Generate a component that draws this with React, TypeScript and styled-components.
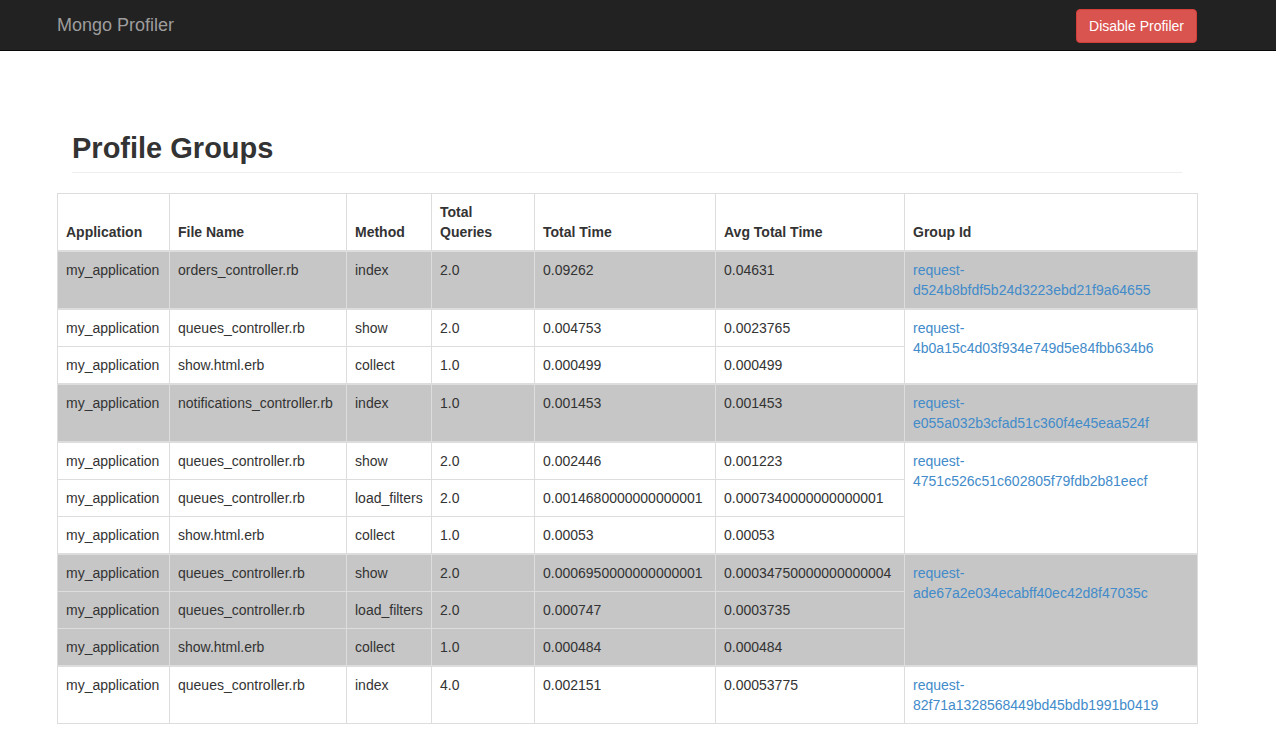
import styled, { createGlobalStyle } from "styled-components";

const GlobalStyle = createGlobalStyle`
	* {
		box-sizing: border-box;
	}
	body {
		margin: 0;
		background: #fff;
		color: #333;
		font-family: "Liberation Sans", Arial, sans-serif;
		font-size: 14px;
		line-height: 20px;
	}
`;

const Navbar = styled.nav`
	height: 51px;
	background-color: #222;
	border-bottom: 1px solid #080808;
`;

const NavInner = styled.div`
	width: 1140px;
	margin-left: 57px;
	height: 50px;
	display: flex;
	align-items: center;
	justify-content: space-between;
`;

const Brand = styled.a`
	font-size: 18px;
	line-height: 20px;
	color: #9d9d9d;
	text-decoration: none;
`;

const DangerButton = styled.button`
	height: 34px;
	margin-top: 1px;
	padding: 6px 12px;
	font-family: inherit;
	font-size: 14px;
	line-height: 20px;
	color: #fff;
	background-color: #d9534f;
	border: 1px solid #d43f3a;
	border-radius: 4px;
	cursor: pointer;
`;

const Main = styled.main`
	width: 1140px;
	margin-left: 57px;
	padding-bottom: 30px;
`;

const PageHeader = styled.div`
	margin: 77px 15px 20px;
	padding-bottom: 4px;
	border-bottom: 1px solid #eee;
`;

const Title = styled.h1`
	margin: 0;
	font-size: 29px;
	line-height: 40px;
	font-weight: bold;
	color: #333;
`;

const Table = styled.table`
	width: 1140px;
	table-layout: fixed;
	border-collapse: collapse;
	border: 1px solid #ddd;
`;

const HeadCell = styled.th`
	padding: 8px;
	text-align: left;
	vertical-align: bottom;
	font-weight: bold;
	border: 1px solid #ddd;
	border-bottom: 2px solid #ddd;
`;

const Group = styled.tbody<{ $shaded: boolean }>`
	background-color: ${(p) => (p.$shaded ? "#c6c6c6" : "#fff")};
	border-top: 2px solid #ddd;
`;

const Cell = styled.td`
	padding: 8px;
	vertical-align: top;
	border: 1px solid #ddd;
	white-space: nowrap;
`;

const IdCell = styled.td`
	padding: 8px;
	vertical-align: top;
	border: 1px solid #ddd;
`;

const IdLink = styled.a`
	color: #428bca;
	text-decoration: none;
`;

type Row = [string, string, string, string, string, string];

const groups: { id: string; rows: Row[] }[] = [
	{
		id: "request-d524b8bfdf5b24d3223ebd21f9a64655",
		rows: [["my_application", "orders_controller.rb", "index", "2.0", "0.09262", "0.04631"]],
	},
	{
		id: "request-4b0a15c4d03f934e749d5e84fbb634b6",
		rows: [
			["my_application", "queues_controller.rb", "show", "2.0", "0.004753", "0.0023765"],
			["my_application", "show.html.erb", "collect", "1.0", "0.000499", "0.000499"],
		],
	},
	{
		id: "request-e055a032b3cfad51c360f4e45eaa524f",
		rows: [["my_application", "notifications_controller.rb", "index", "1.0", "0.001453", "0.001453"]],
	},
	{
		id: "request-4751c526c51c602805f79fdb2b81eecf",
		rows: [
			["my_application", "queues_controller.rb", "show", "2.0", "0.002446", "0.001223"],
			["my_application", "queues_controller.rb", "load_filters", "2.0", "0.0014680000000000001", "0.0007340000000000001"],
			["my_application", "show.html.erb", "collect", "1.0", "0.00053", "0.00053"],
		],
	},
	{
		id: "request-ade67a2e034ecabff40ec42d8f47035c",
		rows: [
			["my_application", "queues_controller.rb", "show", "2.0", "0.0006950000000000001", "0.00034750000000000004"],
			["my_application", "queues_controller.rb", "load_filters", "2.0", "0.000747", "0.0003735"],
			["my_application", "show.html.erb", "collect", "1.0", "0.000484", "0.000484"],
		],
	},
	{
		id: "request-82f71a1328568449bd45bdb1991b0419",
		rows: [["my_application", "queues_controller.rb", "index", "4.0", "0.002151", "0.00053775"]],
	},
];

const columns = [
	{ label: "Application", width: 112 },
	{ label: "File Name", width: 177 },
	{ label: "Method", width: 85 },
	{ label: "Total Queries", width: 103 },
	{ label: "Total Time", width: 181 },
	{ label: "Avg Total Time", width: 189 },
	{ label: "Group Id", width: 293 },
];

function App() {
	return (
		<>
			<GlobalStyle />
			<Navbar>
				<NavInner>
					<Brand href="#">Mongo Profiler</Brand>
					<DangerButton>Disable Profiler</DangerButton>
				</NavInner>
			</Navbar>
			<Main>
				<PageHeader>
					<Title>Profile Groups</Title>
				</PageHeader>
				<Table>
					<colgroup>
						{columns.map((c) => (
							<col key={c.label} style={{ width: c.width }} />
						))}
					</colgroup>
					<thead>
						<tr>
							{columns.map((c) => (
								<HeadCell key={c.label}>
									{c.label === "Total Queries" ? (
										<>
											Total
											<br />
											Queries
										</>
									) : (
										c.label
									)}
								</HeadCell>
							))}
						</tr>
					</thead>
					{groups.map((g, gi) => (
						<Group key={g.id} $shaded={gi % 2 === 0}>
							{g.rows.map((r, ri) => (
								<tr key={ri}>
									{r.map((v, vi) => (
										<Cell key={vi}>{v}</Cell>
									))}
									{ri === 0 && (
										<IdCell rowSpan={g.rows.length}>
											<IdLink href="#">{g.id}</IdLink>
										</IdCell>
									)}
								</tr>
							))}
						</Group>
					))}
				</Table>
			</Main>
		</>
	);
}

export default App;
